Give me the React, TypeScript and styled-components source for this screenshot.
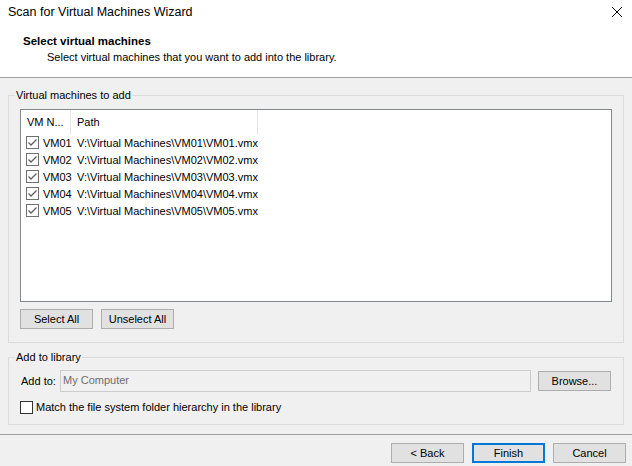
import React from "react";
import styled, { createGlobalStyle } from "styled-components";

const Global = createGlobalStyle`
  html, body { margin: 0; padding: 0; }
  body { background: #f0f0f0; font-family: "Liberation Sans", Arial, sans-serif; font-size: 11px; color: #000; }
  * { box-sizing: border-box; }
`;

const Window = styled.div`
  width: 632px;
  height: 466px;
  display: flex;
  flex-direction: column;
  background: #f0f0f0;
  overflow: hidden;
`;

const TitleBar = styled.div`
  height: 24px;
  display: flex;
  align-items: center;
  justify-content: space-between;
  padding: 0 8px 0 8px;
  background: #fff;
  font-size: 12.5px;
`;

const CloseBtn = styled.div`
  width: 12px;
  height: 12px;
  display: flex;
  margin-right: 1px;
`;

const Header = styled.div`
  background: #fff;
  height: 54px;
  padding: 9px 0 0 23px;
  border-bottom: 1px solid #a0a0a0;
`;

const HeaderTitle = styled.div`
  font-weight: bold;
  font-size: 11.5px;
  line-height: 16px;
`;

const HeaderSub = styled.div`
  line-height: 16px;
  padding-left: 24px;
`;

const Group = styled.fieldset<{ $h: number; $first?: boolean }>`
  margin: ${(p) => (p.$first ? 9 : 6)}px 8px 0 8px;
  padding: 0;
  border: 1px solid #dcdcdc;
  height: ${(p) => p.$h}px;
  min-width: 0;
`;

const Legend = styled.legend`
  margin-left: 6px;
  padding: 0 1px;
  line-height: 16px;
`;

const GroupBody = styled.div<{ $top: number }>`
  padding: ${(p) => p.$top}px 11px 0 11px;
`;

const ListBox = styled.div`
  height: 193px;
  background: #fff;
  border: 1px solid #828790;
`;

const Grid = styled.div`
  display: grid;
  grid-template-columns: 50px 187px;
`;

const HeadCell = styled.div`
  height: 24px;
  line-height: 24px;
  padding-left: 6px;
  border-right: 1px solid #e5e5e5;
  color: #000;
`;

const Cell = styled.div`
  height: 17px;
  display: flex;
  align-items: center;
  padding-left: 6px;
  white-space: nowrap;
`;

const NameCell = styled(Cell)`
  padding-left: 5px;
  gap: 4px;
`;

const Row = styled.div`
  display: flex;
  gap: 8px;
  margin-top: 7px;
`;

const Button = styled.button<{ $default?: boolean }>`
  height: 20px;
  width: 73px;
  padding: 0;
  font: inherit;
  color: #000;
  background: #e1e1e1;
  border: ${(p) => (p.$default ? "2px solid #0078d7" : "1px solid #adadad")};
`;

const AddRow = styled.div`
  display: flex;
  align-items: center;
`;

const Label = styled.span`
  flex: none;
  width: 40px;
  padding-left: 1px;
  white-space: nowrap;
`;

const TextBox = styled.div`
  flex: none;
  width: 471px;
  height: 22px;
  border: 1px solid #cccccc;
  background: #f0f0f0;
  color: #6d6d6d;
  padding: 1px 0 0 2px;
  line-height: 16px;
`;

const BrowseBtn = styled(Button)`
  margin-left: 7px;
`;

const CheckRow = styled.label`
  display: flex;
  align-items: center;
  gap: 3px;
  margin-top: 8px;
  line-height: 14px;
`;

const Footer = styled.div`
  margin-top: 9px;
  border-top: 1px solid #a0a0a0;
  display: flex;
  justify-content: flex-end;
  gap: 8px;
  padding: 8px 6px 0 0;
`;

const Check = ({ checked }: { checked?: boolean }) => (
  <svg width="13" height="13" viewBox="0 0 13 13" style={{ flex: "none" }}>
    <rect x="0.5" y="0.5" width="12" height="12" fill="#fff" stroke={checked ? "#707070" : "#333"} />
    {checked && <path d="M2.5 6.5 L5 9 L10.5 3.5" fill="none" stroke="#606060" strokeWidth="1.3" />}
  </svg>
);

const vms = ["VM01", "VM02", "VM03", "VM04", "VM05"];

export default function App() {
  return (
    <Window>
      <Global />
      <TitleBar>
        <span>Scan for Virtual Machines Wizard</span>
        <CloseBtn>
          <svg width="12" height="12" viewBox="0 0 12 12">
            <path d="M1 1 L11 11 M11 1 L1 11" stroke="#000" strokeWidth="1" />
          </svg>
        </CloseBtn>
      </TitleBar>
      <Header>
        <HeaderTitle>Select virtual machines</HeaderTitle>
        <HeaderSub>Select virtual machines that you want to add into the library.</HeaderSub>
      </Header>
      <Group $h={256} $first>
        <Legend>Virtual machines to add</Legend>
        <GroupBody $top={6}>
          <ListBox>
            <Grid>
              <HeadCell>VM N...</HeadCell>
              <HeadCell>Path</HeadCell>
              {vms.map((v) => (
                <React.Fragment key={v}>
                  <NameCell>
                    <Check checked />
                    {v}
                  </NameCell>
                  <Cell>{`V:\\Virtual Machines\\${v}\\${v}.vmx`}</Cell>
                </React.Fragment>
              ))}
            </Grid>
          </ListBox>
          <Row>
            <Button>Select All</Button>
            <Button>Unselect All</Button>
          </Row>
        </GroupBody>
      </Group>
      <Group $h={76}>
        <Legend>Add to library</Legend>
        <GroupBody $top={5}>
          <AddRow>
            <Label>Add to:</Label>
            <TextBox>My Computer</TextBox>
            <BrowseBtn>Browse...</BrowseBtn>
          </AddRow>
          <CheckRow>
            <Check />
            Match the file system folder hierarchy in the library
          </CheckRow>
        </GroupBody>
      </Group>
      <Footer>
        <Button>&lt; Back</Button>
        <Button $default>Finish</Button>
        <Button>Cancel</Button>
      </Footer>
    </Window>
  );
}
